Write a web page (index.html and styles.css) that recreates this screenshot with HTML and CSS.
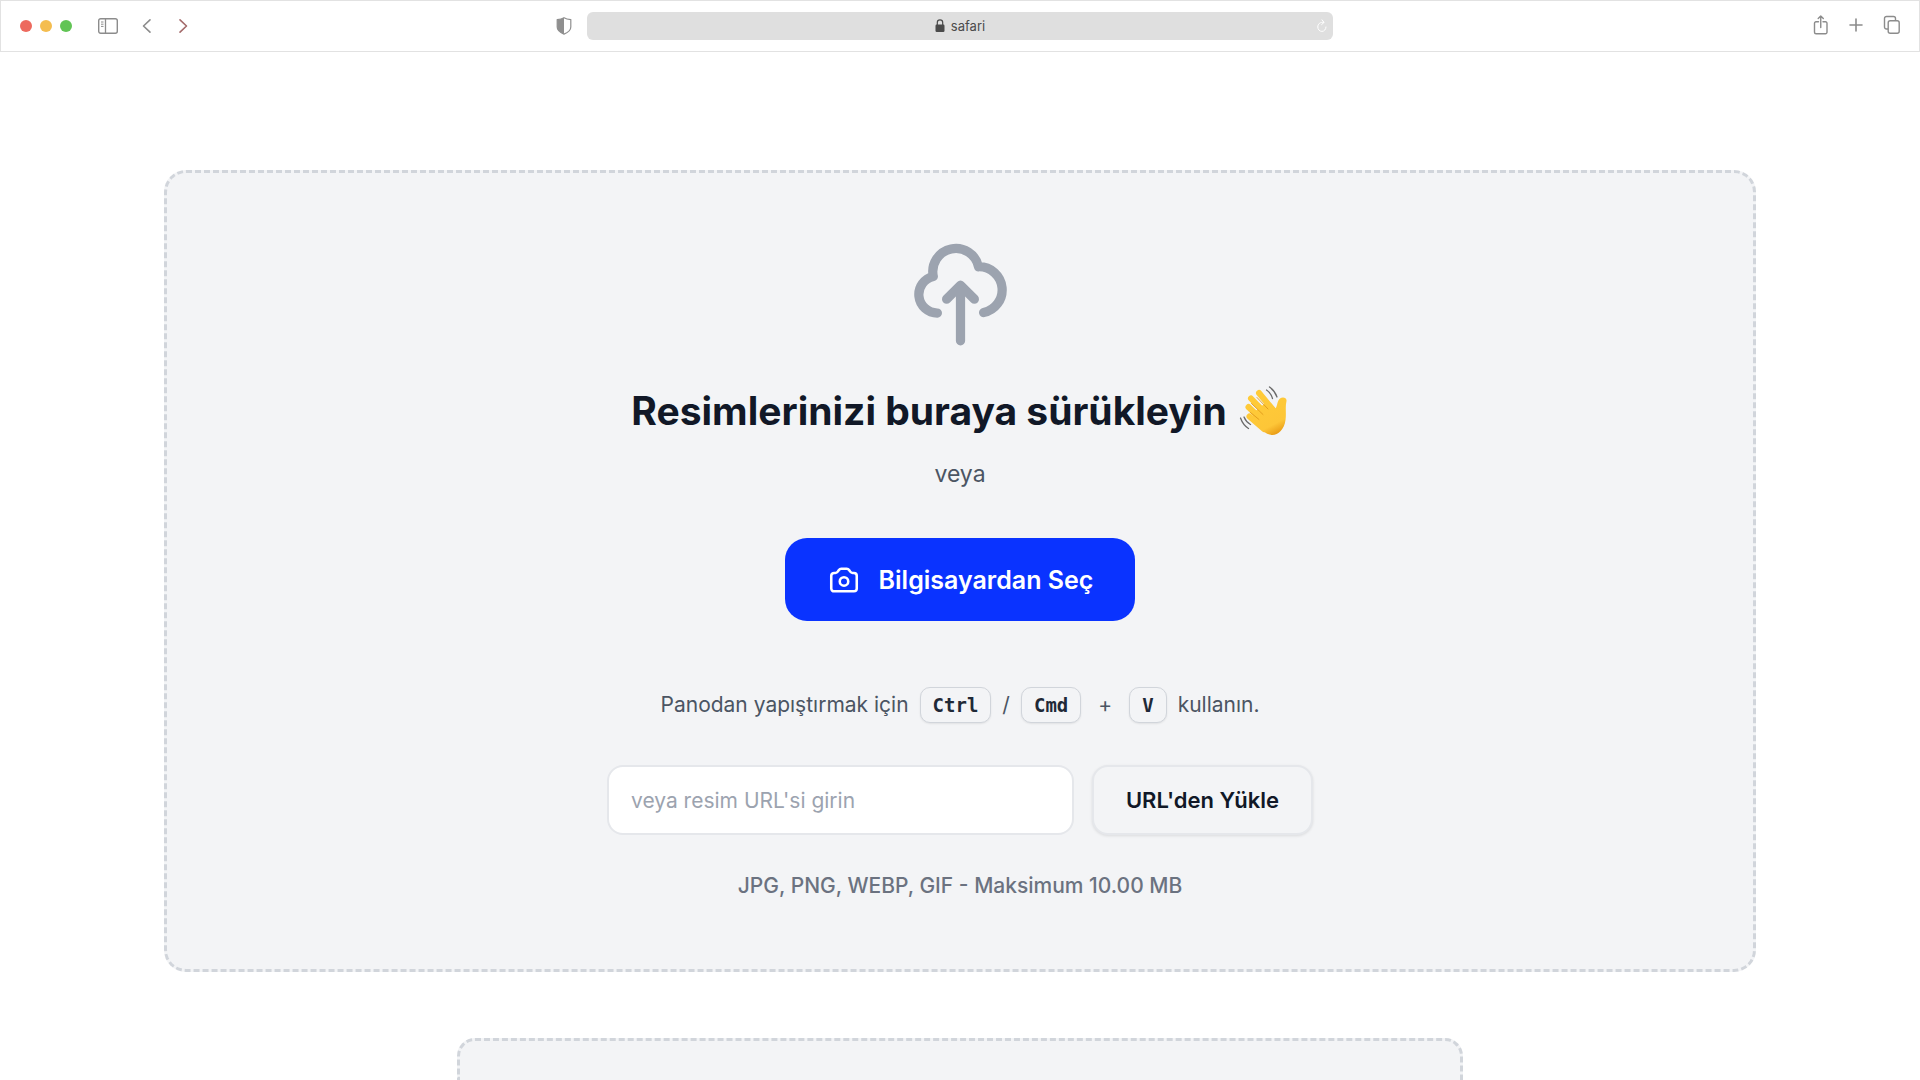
FILE: index.html
```
<!DOCTYPE html>
<html lang="tr">
<head>
    <meta charset="UTF-8">
    <meta name="viewport" content="width=device-width, initial-scale=1.0">
    <title>Resim Yükle</title>
    <link rel="stylesheet" href="styles.css">
</head>
<body>
    <header class="browser-bar">
        <div class="bar-left">
            <div class="window-dots">
                <span class="dot dot-red"></span>
                <span class="dot dot-yellow"></span>
                <span class="dot dot-green"></span>
            </div>
            <button class="bar-button sidebar-button" aria-label="Kenar çubuğu">
                <svg width="20" height="16" viewBox="0 0 20 16" fill="none" stroke="#8c8c8c">
                    <rect x="0.7" y="0.7" width="18.6" height="14.6" rx="2" stroke-width="1.4"/>
                    <path d="M7.5 1v14" stroke-width="1.3"/>
                    <path d="M3 4h2.5M3 6.2h2.5M3 8.4h2.5" stroke-width="1"/>
                </svg>
            </button>
            <button class="bar-button back-button" aria-label="Geri">
                <svg width="10" height="16" viewBox="0 0 10 16" fill="none" stroke="#8c8c8c" stroke-width="1.6" stroke-linecap="round" stroke-linejoin="round">
                    <path d="M8 1.8L1.5 8L8 14.2"/>
                </svg>
            </button>
            <button class="bar-button" aria-label="İleri">
                <svg width="10" height="16" viewBox="0 0 10 16" fill="none" stroke="#a46b6b" stroke-width="1.6" stroke-linecap="round" stroke-linejoin="round">
                    <path d="M2 1.8L8.5 8L2 14.2"/>
                </svg>
            </button>
        </div>
        <div class="bar-center">
            <svg width="16" height="18" viewBox="0 0 16 18">
                <path d="M8 0.8C6 2 3.5 2.5 1.2 2.7V10c0 3.5 3.5 5.8 6.8 7.1c3.3-1.3 6.8-3.6 6.8-7.1V2.7C12.5 2.5 10 2 8 0.8z" fill="none" stroke="#8f8f8f" stroke-width="1.2"/>
                <path d="M8 0.8C6 2 3.5 2.5 1.2 2.7V10c0 3.5 3.5 5.8 6.8 7.1z" fill="#8f8f8f"/>
            </svg>
            <div class="address-bar">
                <svg width="10" height="14" viewBox="0 0 10 14">
                    <path d="M2.3 6V3.6a2.7 2.7 0 0 1 5.4 0V6" fill="none" stroke="#4b4b4b" stroke-width="1.2"/>
                    <rect x="0.5" y="5.6" width="9" height="7.4" rx="1.2" fill="#4b4b4b"/>
                </svg>
                <span>safari</span>
                <button class="reload-button" aria-label="Yenile">
                    <svg width="10" height="14" viewBox="0 0 10 14" fill="none" stroke="#ffffff" stroke-width="1" stroke-linecap="round" stroke-linejoin="round">
                        <path d="M6.8 3.4C3 2.8 0.8 5 0.8 8A4.1 4.4 0 0 0 9 8M5 0.8L7 3.4L4.6 5.6"/>
                    </svg>
                </button>
            </div>
        </div>
        <div class="bar-right">
            <button class="bar-button" aria-label="Paylaş">
                <svg width="16" height="20" viewBox="0 0 16 20" fill="none" stroke="#8c8c8c" stroke-width="1.4" stroke-linecap="round" stroke-linejoin="round">
                    <path d="M5.5 6.7H3a1.5 1.5 0 0 0-1.5 1.5v9A1.5 1.5 0 0 0 3 18.7h9.5a1.5 1.5 0 0 0 1.5-1.5v-9a1.5 1.5 0 0 0-1.5-1.5H10M7.75 12.5V1M5.2 3.5L7.75 1L10.3 3.5"/>
                </svg>
            </button>
            <button class="bar-button" aria-label="Yeni sekme">
                <svg width="14" height="14" viewBox="0 0 14 14" fill="none" stroke="#8c8c8c" stroke-width="1.6" stroke-linecap="round">
                    <path d="M7 1v12M1 7h12"/>
                </svg>
            </button>
            <button class="bar-button" aria-label="Sekmeler">
                <svg width="18" height="20" viewBox="0 0 18 20" fill="none" stroke="#8c8c8c" stroke-width="1.4" stroke-linejoin="round">
                    <rect x="5.2" y="5.7" width="11" height="12.6" rx="2"/>
                    <path d="M5 14H3.5a2 2 0 0 1-2-2V3.5a2 2 0 0 1 2-2H10.5a2 2 0 0 1 2 2V5.5"/>
                </svg>
            </button>
        </div>
    </header>

    <main class="page">
        <section class="dropzone">
            <svg class="cloud-icon" viewBox="0 0 24 24" fill="none" stroke="currentColor" stroke-width="2" stroke-linecap="round" stroke-linejoin="round">
                <path d="M7 16a4 4 0 01-.88-7.903A5 5 0 1115.9 6L16 6a5 5 0 011 9.9M15 13l-3-3m0 0l-3 3m3-3v12"/>
            </svg>
            <h1 class="title">
                Resimlerinizi buraya sürükleyin
                <svg class="wave" viewBox="0 0 50 50" role="img" aria-label="El sallama">
                    <defs>
                        <linearGradient id="skin" gradientUnits="userSpaceOnUse" x1="16" y1="8" x2="38" y2="50">
                            <stop offset="0" stop-color="#ffcb38"/>
                            <stop offset="0.75" stop-color="#fdc638"/>
                            <stop offset="1" stop-color="#e5940f"/>
                        </linearGradient>
                    </defs>
                    <path d="M14 27L29 15L36.500 22.500C38.500 20 38 15 41 12.500C43.500 10.500 48 11.500 47.500 15C46 21 47.500 27 46.500 34C45.500 43 39 49 33.500 49C27 49 20 42 14 36z" fill="url(#skin)"/>
                    <g fill="none" stroke="url(#skin)" stroke-linecap="round" stroke-width="6">
                        <path d="M10.500 30.500L25 43"/>
                        <path d="M9.500 21L27 38"/>
                        <path d="M12 12.500L30 31"/>
                        <path d="M20 7L35 25"/>
                    </g>
                    <path d="M11.500 26.500L20 33.500M12.500 17.500L24 28.500M18 11.500L29 23" fill="none" stroke="#e09a1c" stroke-width="0.9" stroke-linecap="round"/>
                    <path d="M27.500 4Q32 7 33.500 12.500M30.500 1Q36 5 38 11M1.500 32Q4 39 9.500 42.500M5 31Q7 36 11.500 38.500" fill="none" stroke="#6b6b6b" stroke-width="1.3" stroke-linecap="round"/>
                </svg>
            </h1>
            <p class="or">veya</p>
            <button class="select-button">
                <svg width="34" height="34" viewBox="0 0 24 24" fill="none" stroke="currentColor" stroke-width="1.8" stroke-linecap="round" stroke-linejoin="round">
                    <path d="M3 9a2 2 0 012-2h.93a2 2 0 001.664-.89l.812-1.22A2 2 0 0110.07 4h3.86a2 2 0 011.664.89l.812 1.22A2 2 0 0018.07 7H19a2 2 0 012 2v9a2 2 0 01-2 2H5a2 2 0 01-2-2V9z"/>
                    <circle cx="12" cy="13" r="3"/>
                </svg>
                Bilgisayardan Seç
            </button>
            <p class="paste-hint">
                <span>Panodan yapıştırmak için</span>
                <kbd>Ctrl</kbd>
                <span>/</span>
                <kbd>Cmd</kbd>
                <span class="plus">+</span>
                <kbd>V</kbd>
                <span>kullanın.</span>
            </p>
            <form class="url-form">
                <input class="url-input" type="url" placeholder="veya resim URL'si girin" aria-label="Resim URL'si">
                <button class="url-button" type="button">URL'den Yükle</button>
            </form>
            <p class="formats">JPG, PNG, WEBP, GIF - Maksimum 10.00 MB</p>
        </section>
        <section class="next-panel"></section>
    </main>
</body>
</html>
```

FILE: styles.css
```
* {
    box-sizing: border-box;
}

body {
    margin: 0;
    min-height: 100vh;
    display: flex;
    flex-direction: column;
    background: #ffffff;
    font-family: 'Inter', sans-serif;
    color: #111827;
}

button {
    font-family: inherit;
    cursor: pointer;
}

svg {
    display: block;
    flex-shrink: 0;
}

/* browser bar */
.browser-bar {
    display: grid;
    grid-template-columns: 28.5% 41.3% 1fr;
    align-items: center;
    flex-shrink: 0;
    height: 52px;
    padding: 0 18px 0 19px;
    border: 1px solid #e2e2e2;
}

.bar-left,
.bar-right,
.bar-center,
.window-dots {
    display: flex;
    align-items: center;
}

.window-dots {
    gap: 8px;
}

.dot {
    width: 12px;
    height: 12px;
    border-radius: 50%;
}

.dot-red {
    background: #ed6a5e;
}

.dot-yellow {
    background: #f4bd50;
}

.dot-green {
    background: #61c455;
}

.bar-button {
    padding: 0;
    border: none;
    background: none;
}

.sidebar-button {
    margin: 0 24px 0 26px;
}

.back-button {
    margin-right: 26px;
}

.bar-center {
    gap: 15px;
}

.address-bar {
    position: relative;
    flex: 1;
    display: flex;
    justify-content: center;
    align-items: center;
    gap: 6px;
    height: 28px;
    border-radius: 6px;
    background: #dfdfdf;
    color: #4b4b4b;
    font-size: 13px;
}

.reload-button {
    position: absolute;
    right: 6px;
    padding: 0;
    border: none;
    background: none;
}

.bar-right {
    justify-content: flex-end;
    gap: 20px;
    padding-bottom: 2px;
}

/* page */
.page {
    display: flex;
    flex-direction: column;
    align-items: center;
    flex: 1;
    padding: 118px 164px 0;
}

.dropzone {
    display: flex;
    flex-direction: column;
    align-items: center;
    width: 100%;
    padding: 66px 24px;
    border: 3px dashed #d1d5db;
    border-radius: 22px;
    background: #f3f4f6;
}

.cloud-icon {
    width: 111px;
    height: 111px;
    color: #9ca3af;
}

.title {
    display: flex;
    align-items: center;
    gap: 12px;
    margin: 36px 0 0;
    font-size: 39px;
    line-height: 50px;
    font-weight: 700;
}

.wave {
    width: 50px;
    height: 50px;
}

.or {
    margin: 20px 0 0;
    font-size: 23px;
    line-height: 36px;
    color: #4b5563;
}

.select-button {
    display: flex;
    align-items: center;
    gap: 18px;
    height: 83px;
    margin-top: 46px;
    padding: 0 42px;
    border: none;
    border-radius: 22px;
    background: #0a33ff;
    color: #ffffff;
    font-size: 25px;
    font-weight: 600;
}

.paste-hint {
    display: flex;
    align-items: center;
    gap: 11px;
    margin: 66px 0 0;
    font-size: 21px;
    line-height: 36px;
    color: #4b5563;
}

.plus {
    margin: 0 6px;
}

kbd {
    padding: 0 12px;
    border: 1px solid #d1d5db;
    border-radius: 10px;
    background: #f3f4f6;
    box-shadow: 0 1px 2px rgba(0, 0, 0, 0.08);
    color: #1f2937;
    font-family: 'DejaVu Sans Mono', monospace;
    font-size: 19px;
    line-height: 34px;
    font-weight: 700;
}

.url-form {
    display: flex;
    gap: 18px;
    width: 100%;
    max-width: 706px;
    margin-top: 42px;
}

.url-input,
.url-button {
    height: 70px;
    border: 2px solid #e5e7eb;
    border-radius: 16px;
}

.url-input {
    flex: 1;
    min-width: 0;
    padding: 0 22px;
    background: #ffffff;
    color: #111827;
    font-family: inherit;
    font-size: 21px;
}

.url-input::placeholder {
    color: #9ca3af;
}

.url-button {
    padding: 0 32px;
    background: #f3f4f6;
    box-shadow: 0 1px 3px rgba(0, 0, 0, 0.1);
    color: #111827;
    font-size: 22px;
    font-weight: 600;
}

.formats {
    margin: 34px 0 0;
    font-size: 21px;
    line-height: 34px;
    font-weight: 500;
    color: #6b7280;
}

.next-panel {
    flex: 1;
    width: 100%;
    max-width: 1006px;
    margin-top: 66px;
    border: 3px dashed #d1d5db;
    border-bottom: none;
    border-radius: 18px 18px 0 0;
    background: #f3f4f6;
}
```
